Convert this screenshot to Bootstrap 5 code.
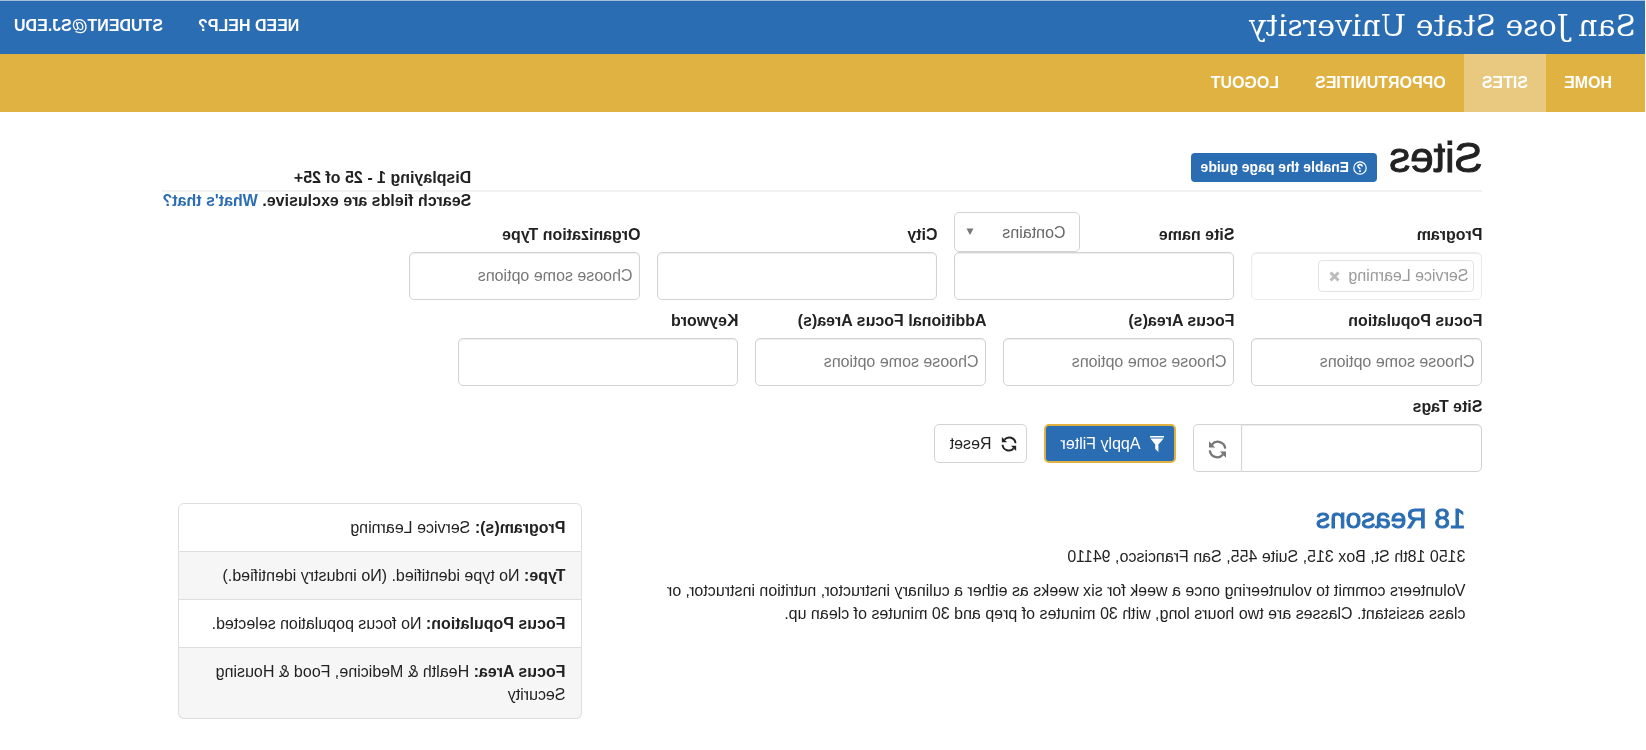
<!DOCTYPE html>
<html lang="en">
<head>
<meta charset="utf-8">
<meta name="viewport" content="width=device-width, initial-scale=1">
<title>Sites - San Jose State University</title>
<link href="https://cdn.jsdelivr.net/npm/bootstrap@5.3.0/dist/css/bootstrap.min.css" rel="stylesheet">
<style>
:root { --brand: #2b6db3; --gold: #dfb242; --ink: #222; --line: #d2d2d2; }
body { font-family: "Liberation Sans", Arial, sans-serif; font-size: 16px; line-height: 23px; color: var(--ink); background: #fff; overflow-x: hidden; }
a { color: var(--brand); text-decoration: none; }
/* the whole interface is shown as in a mirror */
.mirrored { transform: scaleX(-1); min-height: 100vh; padding-left: 1px; }
.topbar { background: var(--brand); border-top: 1px solid #a4bedb; min-height: 54px; padding: 0 14px 4px 9px; }
.topbar a { color: #fff; font-weight: 700; }
.topbar .school { font-family: "DejaVu Serif", serif; font-size: 30px; line-height: 40px; font-weight: 400; }
.topbar .tools { gap: 35px; }
.mainnav { background: var(--gold); padding: 0 15px; }
.mainnav a { color: #fff; font-weight: 700; padding: 17px 18px 18px; display: block; }
.mainnav a.active { background: #e8c97f; }
.pagehead { border-bottom: 2px solid #f2f2f2; margin-top: 21px; height: 59px; gap: 12px; }
.pagehead h1 { font-size: 42px; line-height: 46px; font-weight: 400; -webkit-text-stroke: 1px var(--ink); color: var(--ink); margin-top: 2px; }
.guide { background: var(--brand); color: #fff; font-size: 14px; line-height: 17px; font-weight: 700; border: 0; border-radius: 4px; padding: 6px 10px; gap: 4px; margin-bottom: 8px; }
.counts { font-weight: 700; margin-bottom: -22px; }
.filters { row-gap: 9px; margin-top: 20px; }
.filters-row { column-gap: 17px; }
.filters label { font-weight: 700; display: block; margin-bottom: 6px; }
.w-choice { width: 231px; }
.w-text { width: 280px; }
.w-tags { width: 289px; }
.field { border: 1px solid var(--line); border-radius: 5px; height: 48px; padding: 0 7px; width: 100%; background: #fff; color: #333; outline: 0; box-shadow: inset 0 1px 1px rgba(0,0,0,.08); }
.field::placeholder { color: #777; opacity: 1; }
.locked { border-color: #ebebeb; }
.chip { border: 1px solid #e2e2e2; border-radius: 4px; color: #999; line-height: 30px; padding: 0 6px 0 5px; gap: 8px; height: 32px; }
.chip button { border: 0; background: none; padding: 0; line-height: 0; margin-right: 4px; }
.pick { position: relative; width: 126px; }
.pick select { appearance: none; height: 40px; width: 100%; border: 1px solid var(--line); border-radius: 5px; background: #fff; color: #666; padding: 0 14px; }
.pick svg { position: absolute; right: 12px; top: 16px; pointer-events: none; }
.tags .field { border-radius: 5px 0 0 5px; width: 241px; }
.tags button { border: 1px solid var(--line); border-left: 0; border-radius: 0 5px 5px 0; background: #fff; width: 48px; color: #777; }
.act { height: 39px; border-radius: 5px; margin-bottom: 9px; gap: 10px; background: #fff; border: 1px solid var(--line); color: var(--ink); padding: 0 14px; }
.act.apply { width: 132px; padding: 0 10px; border: 2px solid var(--gold); background: var(--brand); color: #fff; }
.act.reset { width: 93px; padding: 0 10px 0 9px; }
.results { margin-top: 31px; }
.results .about { padding: 0 24px 0 17px; }
.results .facts { padding: 0 16px 0 20px; }
.about h2 { font-size: 28px; line-height: 32px; font-weight: 400; -webkit-text-stroke: 1px var(--brand); margin: 0 0 10px; }
.about p { margin: 0 0 11px; }
.facts li { padding: 12px 16px; color: var(--ink); border-color: #dedede; }
.facts li:nth-child(even) { background: #f6f6f6; }
</style>
</head>
<body>
<div class="mirrored">
<header class="topbar d-flex align-items-center justify-content-between">
  <a class="school" href="#">San Jose State University</a>
  <div class="tools d-flex"><a href="#">NEED HELP?</a><a href="#">STUDENT@SJ.EDU</a></div>
</header>
<nav class="mainnav d-flex">
  <a href="#">HOME</a><a href="#" class="active" aria-current="page">SITES</a><a href="#">OPPORTUNITIES</a><a href="#">LOGOUT</a>
</nav>
<main class="container px-0">
  <div class="pagehead d-flex align-items-end">
    <h1 class="mb-0 align-self-start">Sites</h1>
    <button type="button" class="guide d-flex align-items-center">
      <svg width="14" height="14" viewBox="0 0 14 14" fill="none" stroke="currentColor"><circle cx="7" cy="7" r="6.2" stroke-width="1.2"/><path d="M4.9 5.6C4.9 3 9.1 3 9.1 5.3 9.1 6.7 7 6.7 7 8.3" stroke-width="1.6"/><path d="M7 9.3v1.6" stroke-width="1.7"/></svg>
      Enable the page guide</button>
    <div class="counts ms-auto">Displaying 1 - 25 of 25+<br>Search fields are exclusive. <a href="#">What's that?</a></div>
  </div>
  <form class="filters d-flex flex-column">
    <div class="d-flex flex-wrap align-items-end filters-row">
      <div class="w-choice"><label for="program">Program</label>
        <div class="field locked d-flex align-items-center"><span class="chip d-flex align-items-center">Service Learning <button type="button" id="program" aria-label="Remove Service Learning"><svg width="11" height="11" viewBox="0 0 11 11" stroke="#bbb" stroke-width="3"><path d="M1.5 1.5l8 8M9.5 1.5l-8 8"/></svg></button></span></div></div>
      <div class="w-text"><div class="d-flex justify-content-between align-items-end"><label for="site">Site name</label>
        <div class="pick"><select aria-label="Site name match"><option>Contains</option></select><svg width="8" height="8" viewBox="0 0 8 8" fill="#777"><path d="M.5 0.5h7L4 7z"/></svg></div></div>
        <input class="field d-block" id="site" type="text"></div>
      <div class="w-text"><label for="city">City</label><input class="field d-block" id="city" type="text"></div>
      <div class="w-choice"><label for="org">Organization Type</label><input class="field d-block" id="org" type="text" placeholder="Choose some options"></div>
    </div>
    <div class="d-flex flex-wrap align-items-end filters-row">
      <div class="w-choice"><label for="pop">Focus Population</label><input class="field d-block" id="pop" type="text" placeholder="Choose some options"></div>
      <div class="w-choice"><label for="area">Focus Area(s)</label><input class="field d-block" id="area" type="text" placeholder="Choose some options"></div>
      <div class="w-choice"><label for="more">Additional Focus Area(s)</label><input class="field d-block" id="more" type="text" placeholder="Choose some options"></div>
      <div class="w-text"><label for="key">Keyword</label><input class="field d-block" id="key" type="text"></div>
    </div>
    <div class="d-flex flex-wrap align-items-end filters-row">
      <div class="w-tags"><label for="tags">Site Tags</label>
        <div class="tags d-flex"><input class="field" id="tags" type="text"><button type="button" aria-label="Reload tags"><svg width="19" height="19" viewBox="0 0 19 19" fill="none" stroke="currentColor" stroke-width="2.3"><path d="M1.8 8.6A7.5 7.5 0 0 1 15 4.4M17.2 10.4A7.5 7.5 0 0 1 4 14.6"/><path d="M18 1.2v6.2h-6.2zM1 17.8v-6.2h6.2z" fill="currentColor" stroke="none"/></svg></button></div></div>
      <button type="submit" class="act apply d-flex align-items-center"><svg width="14" height="16" viewBox="0 0 14 16" fill="currentColor"><path d="M0 0h14v1.4H0zM.4 2.6h13.2L8.8 8.6V13l-3.2 3V8.6z"/></svg><span class="text-nowrap">Apply Filter</span></button>
      <button type="reset" class="act reset d-flex align-items-center"><svg width="16" height="16" viewBox="0 0 19 19" fill="none" stroke="currentColor" stroke-width="2.3"><path d="M1.8 8.6A7.5 7.5 0 0 1 15 4.4M17.2 10.4A7.5 7.5 0 0 1 4 14.6"/><path d="M18 1.2v6.2h-6.2zM1 17.8v-6.2h6.2z" fill="currentColor" stroke="none"/></svg>Reset</button>
    </div>
  </form>
  <section class="results row g-0">
    <div class="about col-8">
      <h2><a href="#">18 Reasons</a></h2>
      <p>3150 18th St, Box 315, Suite 455, San Francisco, 94110</p>
      <p>Volunteers commit to volunteering once a week for six weeks as either a culinary instructor, nutrition instructor, or class assistant. Classes are two hours long, with 30 minutes of prep and 30 minutes of clean up.</p>
    </div>
    <div class="facts col-4">
      <ul class="list-group">
        <li class="list-group-item"><strong>Program(s):</strong> Service Learning</li>
        <li class="list-group-item"><strong>Type:</strong> No type identified. (No industry identified.)</li>
        <li class="list-group-item"><strong>Focus Population:</strong> No focus population selected.</li>
        <li class="list-group-item"><strong>Focus Area:</strong> Health &amp; Medicine, Food &amp; Housing Security</li>
      </ul>
    </div>
  </section>
</main>
</div>
<script src="https://cdn.jsdelivr.net/npm/bootstrap@5.3.0/dist/js/bootstrap.bundle.min.js"></script>
</body>
</html>
